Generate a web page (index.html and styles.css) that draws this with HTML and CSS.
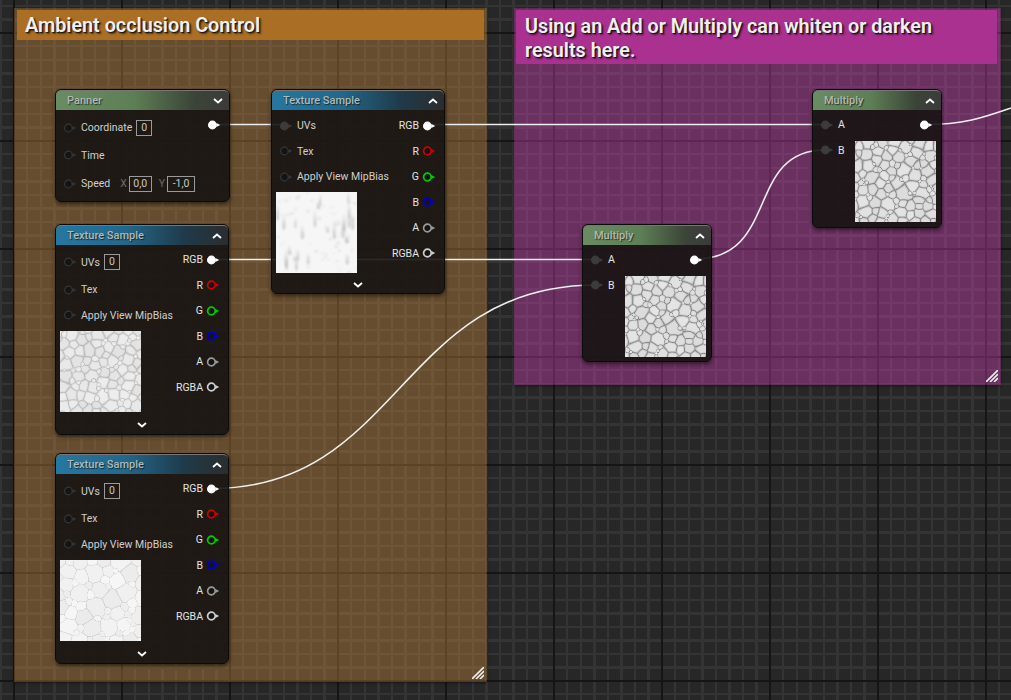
FILE: index.html
```html
<!DOCTYPE html>
<html lang="en">
<head>
  <meta charset="UTF-8">
  <title>Material graph</title>
  <link rel="stylesheet" href="styles.css">
</head>
<body>
  <svg width="0" height="0" class="defs">
    <symbol id="pin" viewBox="0 0 14 10">
      <path d="M9.4 3.1L13.2 5L9.4 6.9Z" fill="currentColor" stroke="none"/>
      <circle cx="5.4" cy="5" r="3.8"/>
    </symbol>
    <symbol id="chev-up" viewBox="0 0 10 6"><path d="M1 5L5 1.5L9 5" fill="none" stroke="#fff" stroke-width="1.8"/></symbol>
    <symbol id="chev-down" viewBox="0 0 10 6"><path d="M1 1L5 4.5L9 1" fill="none" stroke="#fff" stroke-width="1.8"/></symbol>
    <symbol id="grip" viewBox="0 0 12 12">
      <path d="M0 12L12 0M4 12L12 4M8 12L12 8" fill="none" stroke="#f0f0f0" stroke-width="1.6"/>
    </symbol>
  </svg>

  <div class="graph">
    <section class="comment comment-brown">
      <h2 class="comment-title">Ambient occlusion Control</h2>
      <svg class="grip"><use href="#grip"/></svg>
    </section>
    <section class="comment comment-purple">
      <h2 class="comment-title">Using an Add or Multiply can whiten or darken results here.</h2>
      <svg class="grip"><use href="#grip"/></svg>
    </section>

    <svg class="wires" width="1011" height="700">
      <path d="M213 124.5H285"/>
      <path d="M428 124.5H825"/>
      <path d="M213 259.5H596"/>
      <path d="M213 488.5C400 488 400 285 596 285"/>
      <path d="M695 259C780 259 745 150 825 150"/>
      <path d="M925 124.5C965 124.5 985 117 1011 108"/>
    </svg>

    <!-- Panner -->
    <div class="node node-panner">
      <div class="node-head head-green"><span>Panner</span><svg class="chev"><use href="#chev-down"/></svg></div>
      <div class="node-body">
        <div class="pins-in">
          <div class="pin-row row-box"><svg class="pin"><use href="#pin"/></svg>Coordinate <span class="val">0</span></div>
          <div class="pin-row row-time"><svg class="pin"><use href="#pin"/></svg>Time</div>
          <div class="pin-row row-box"><svg class="pin"><use href="#pin"/></svg>Speed <i class="axis">X</i><span class="val val-x">0,0</span><i class="axis">Y</i><span class="val val-y">-1,0</span></div>
        </div>
        <div class="pins-out">
          <div class="pin-row"><svg class="pin pin-white"><use href="#pin"/></svg></div>
        </div>
      </div>
    </div>

    <!-- Texture sample, top -->
    <div class="node node-tex node-tex-a">
      <div class="node-head head-blue"><span>Texture Sample</span><svg class="chev"><use href="#chev-up"/></svg></div>
      <div class="node-body">
        <div class="pins-in">
          <div class="pin-row"><svg class="pin pin-linked"><use href="#pin"/></svg>UVs</div>
          <div class="pin-row"><svg class="pin"><use href="#pin"/></svg>Tex</div>
          <div class="pin-row"><svg class="pin"><use href="#pin"/></svg>Apply View MipBias</div>
          <canvas class="tex" width="81" height="81" data-kind="rain"></canvas>
        </div>
        <div class="pins-out">
          <div class="pin-row">RGB<svg class="pin pin-white"><use href="#pin"/></svg></div>
          <div class="pin-row">R<svg class="pin pin-r"><use href="#pin"/></svg></div>
          <div class="pin-row">G<svg class="pin pin-g"><use href="#pin"/></svg></div>
          <div class="pin-row">B<svg class="pin pin-b"><use href="#pin"/></svg></div>
          <div class="pin-row">A<svg class="pin pin-a"><use href="#pin"/></svg></div>
          <div class="pin-row">RGBA<svg class="pin pin-rgba"><use href="#pin"/></svg></div>
        </div>
      </div>
      <div class="node-foot"><svg class="chev"><use href="#chev-down"/></svg></div>
    </div>

    <!-- Texture sample, middle -->
    <div class="node node-tex node-tex-b">
      <div class="node-head head-blue"><span>Texture Sample</span><svg class="chev"><use href="#chev-up"/></svg></div>
      <div class="node-body">
        <div class="pins-in">
          <div class="pin-row row-uv"><svg class="pin"><use href="#pin"/></svg>UVs <span class="val">0</span></div>
          <div class="pin-row"><svg class="pin"><use href="#pin"/></svg>Tex</div>
          <div class="pin-row"><svg class="pin"><use href="#pin"/></svg>Apply View MipBias</div>
          <canvas class="tex" width="81" height="81" data-kind="soft"></canvas>
        </div>
        <div class="pins-out">
          <div class="pin-row">RGB<svg class="pin pin-white"><use href="#pin"/></svg></div>
          <div class="pin-row">R<svg class="pin pin-r"><use href="#pin"/></svg></div>
          <div class="pin-row">G<svg class="pin pin-g"><use href="#pin"/></svg></div>
          <div class="pin-row">B<svg class="pin pin-b"><use href="#pin"/></svg></div>
          <div class="pin-row">A<svg class="pin pin-a"><use href="#pin"/></svg></div>
          <div class="pin-row">RGBA<svg class="pin pin-rgba"><use href="#pin"/></svg></div>
        </div>
      </div>
      <div class="node-foot"><svg class="chev"><use href="#chev-down"/></svg></div>
    </div>

    <!-- Texture sample, bottom -->
    <div class="node node-tex node-tex-c">
      <div class="node-head head-blue"><span>Texture Sample</span><svg class="chev"><use href="#chev-up"/></svg></div>
      <div class="node-body">
        <div class="pins-in">
          <div class="pin-row row-uv"><svg class="pin"><use href="#pin"/></svg>UVs <span class="val">0</span></div>
          <div class="pin-row"><svg class="pin"><use href="#pin"/></svg>Tex</div>
          <div class="pin-row"><svg class="pin"><use href="#pin"/></svg>Apply View MipBias</div>
          <canvas class="tex" width="81" height="81" data-kind="pale"></canvas>
        </div>
        <div class="pins-out">
          <div class="pin-row">RGB<svg class="pin pin-white"><use href="#pin"/></svg></div>
          <div class="pin-row">R<svg class="pin pin-r"><use href="#pin"/></svg></div>
          <div class="pin-row">G<svg class="pin pin-g"><use href="#pin"/></svg></div>
          <div class="pin-row">B<svg class="pin pin-b"><use href="#pin"/></svg></div>
          <div class="pin-row">A<svg class="pin pin-a"><use href="#pin"/></svg></div>
          <div class="pin-row">RGBA<svg class="pin pin-rgba"><use href="#pin"/></svg></div>
        </div>
      </div>
      <div class="node-foot"><svg class="chev"><use href="#chev-down"/></svg></div>
    </div>

    <!-- Multiply nodes -->
    <div class="node node-mul node-mul-a">
      <div class="node-head head-green"><span>Multiply</span><svg class="chev"><use href="#chev-up"/></svg></div>
      <div class="node-body">
        <div class="pins-in">
          <div class="pin-row"><svg class="pin pin-linked"><use href="#pin"/></svg>A</div>
          <div class="pin-row"><svg class="pin pin-linked"><use href="#pin"/></svg>B</div>
        </div>
        <div class="pins-out">
          <div class="pin-row"><svg class="pin pin-white"><use href="#pin"/></svg></div>
          <canvas class="tex" width="81" height="81" data-kind="hard"></canvas>
        </div>
      </div>
    </div>

    <div class="node node-mul node-mul-b">
      <div class="node-head head-green"><span>Multiply</span><svg class="chev"><use href="#chev-up"/></svg></div>
      <div class="node-body">
        <div class="pins-in">
          <div class="pin-row"><svg class="pin pin-linked"><use href="#pin"/></svg>A</div>
          <div class="pin-row"><svg class="pin pin-linked"><use href="#pin"/></svg>B</div>
        </div>
        <div class="pins-out">
          <div class="pin-row"><svg class="pin pin-white"><use href="#pin"/></svg></div>
          <canvas class="tex" width="81" height="81" data-kind="hard"></canvas>
        </div>
      </div>
    </div>
  </div>

  <script src="textures.js"></script>
</body>
</html>
```

FILE: styles.css
```css
* { box-sizing: border-box; }
html, body { margin: 0; height: 100%; overflow: hidden; background: #262626; }
.defs { position: absolute; }

.graph {
  position: relative;
  width: 1011px;
  height: 700px;
  overflow: hidden;
  font-family: Roboto, "Liberation Sans", sans-serif;
  background-color: #272727;
  background-image:
    linear-gradient(90deg, #151515 0 2px, transparent 2px),
    linear-gradient(#151515 0 2px, transparent 2px),
    repeating-linear-gradient(90deg, #343434 0 2px, transparent 2px 13.5px),
    repeating-linear-gradient(#343434 0 2px, transparent 2px 13.5px);
  background-size: 108px 108px;
  background-position: 13px 32px;
}

/* comment boxes */
.comment {
  position: absolute;
  border: 1px solid rgba(0, 0, 0, .12);
  box-shadow: 0 1px 3px rgba(0, 0, 0, .45);
}
.comment-brown { left: 14px; top: 8px; width: 473px; height: 674px; background: rgba(204, 140, 62, .39); }
.comment-purple { left: 514px; top: 8px; width: 487px; height: 377px; background: rgba(208, 63, 183, .4); }
.comment-title {
  margin: 1px 2px 0;
  padding: 0 8px;
  font-size: 19.8px;
  font-weight: 600;
  line-height: 24px;
  color: #f0f0f0;
  text-shadow: 1px 1px 1px #111, 2px 2px 2px rgba(0, 0, 0, .5);
}
.comment-brown .comment-title { height: 30px; padding-top: 4px; background: #aa6f24; margin-right: 2px; }
.comment-purple .comment-title { height: 54px; padding-top: 5px; padding-left: 9px; margin-left: 1px; margin-right: 3px; background: #ab3191; }
.grip { position: absolute; right: 2px; bottom: 2px; width: 12px; height: 12px; }

.wires { position: absolute; left: 0; top: 0; }
.wires path { fill: none; stroke: #efefef; stroke-width: 1.6; }

/* nodes */
.node {
  position: absolute;
  border: 1px solid #0b0b0b;
  border-radius: 6px;
  background: rgba(22, 20, 18, .9);
  box-shadow: 0 2px 4px rgba(0, 0, 0, .55);
  color: #cfcfcf;
  font-size: 10.5px;
}
.node-panner { left: 55px; top: 89px; width: 175px; height: 113px; }
.node-tex { width: 174px; }
.node-tex-a { left: 271px; top: 89px; }
.node-tex-b { left: 55px; top: 224px; }
.node-tex-c { left: 55px; top: 453px; }
.node-mul { width: 130px; }
.node-mul-a { left: 582px; top: 224px; height: 138px; }
.node-mul-b { left: 812px; top: 89px; height: 139px; }

.node-head {
  display: flex;
  align-items: center;
  justify-content: space-between;
  height: 20px;
  padding: 0 6px 0 11px;
  border-radius: 5px 5px 0 0;
  border-top: 1px solid #777;
  font-size: 11px;
  font-weight: 500;
  color: #b4b8b2;
  text-shadow: 1px 1px 1px rgba(0, 0, 0, .6);
}
.head-green { background: linear-gradient(90deg, #6a8c62 0, #5d7f55 45%, #3b4438 80%, #3b3b3a 100%); }
.head-blue { background: linear-gradient(90deg, #2677a0 0, #22688c 40%, #1f3a49 75%, #2b2d2e 100%); }

.node-body { display: flex; justify-content: space-between; padding: 2px 0 0 0; }
.pins-in { display: flex; flex-direction: column; }
.pins-out { display: flex; flex-direction: column; align-items: flex-end; color: #e4e4e4; }
.node-mul .pins-in { color: #e4e4e4; }

.pin-row { display: flex; align-items: center; gap: 4px; height: 25.5px; white-space: nowrap; }
.pins-in .pin-row { padding-left: 7px; }
.pins-out .pin-row { padding-right: 8px; gap: 3px; }
.row-box { height: 29px; }
.row-time { height: 26px; }
.row-uv { height: 30px; }
.row-box + .row-time + .row-box { margin-top: 1px; }
.node-panner .pins-in .pin-row:first-child { margin-top: 1px; }

.pin { width: 14px; height: 10px; flex: none; color: #363636; fill: #141414; stroke: #363636; stroke-width: 1.2; }
.pin-linked { color: #3c3c3c; fill: #3c3c3c; stroke: #3c3c3c; }
.pin-white { color: #fff; fill: #fff; stroke: #fff; }
.pin-r { color: #d00000; stroke: #d00000; stroke-width: 1.7; }
.pin-g { color: #00cc00; stroke: #00cc00; stroke-width: 1.7; }
.pin-b { color: #0000d0; stroke: #0000d0; stroke-width: 1.7; }
.pin-a { color: #9a9a9a; stroke: #9a9a9a; stroke-width: 1.7; }
.pin-rgba { color: #cfcfcf; stroke: #cfcfcf; stroke-width: 1.7; }

.val {
  display: inline-block;
  min-width: 16px;
  height: 16px;
  padding: 0 3px;
  border: 1px solid #9a9a9a;
  line-height: 13px;
  text-align: center;
  color: #c8c8c8;
}
.val-x { width: 23px; padding: 0; }
.val-y { width: 28px; padding: 0; }
.axis { font-style: normal; color: #6c6c6c; margin-left: 6px; margin-right: -2px; }
.axis + .val + .axis { margin-left: 3px; }

.tex { display: block; width: 81px; height: 81px; }
.pins-in .tex { margin: 3px 0 0 4px; }
.node-tex-a .pins-in .tex { margin-top: 2px; }
.node-tex-a .pin-row:first-child { margin-top: 1px; }
.pins-out .tex { margin: 3px 5px 0 0; }

.chev { width: 10px; height: 6px; }
.node-foot { display: flex; justify-content: center; align-items: center; height: 22px; padding-top: 3px; }
.node-tex-a .node-foot { height: 20px; padding-top: 4px; }
```

FILE: textures.js
```js
// small seeded generator so the textures come out the same every load
function rng(seed) {
  return function () {
    seed = (seed * 16807) % 2147483647;
    return seed / 2147483647;
  };
}

const kinds = {
  soft: { seed: 71, rmax: 4.6, rmin: 1.2, light: 238, dark: 192, width: 0.9, blur: 0.6 },
  pale: { seed: 23, rmax: 7, rmin: 2, light: 247, dark: 214, width: 0.3, blur: 0.5 },
  hard: { seed: 137, rmax: 4.6, rmin: 0.9, light: 230, dark: 140, width: 0.85, blur: 0.45 }
};

// pack stones biggest first, then split the square by distance / radius,
// which gives rounded borders between a big stone and a small one
function pebbles(ctx, opt) {
  const rand = rng(opt.seed);
  const stones = [];
  for (let r = opt.rmax; r >= opt.rmin; r -= 0.25) {
    for (let n = 0; n < 60; n++) {
      const x = rand() * 87 - 3, y = rand() * 87 - 3;
      const rr = r * (0.85 + rand() * 0.3);
      if (stones.every(s => Math.hypot(s.x - x, s.y - y) > (s.r + rr) * 0.95)) {
        stones.push({ x: x, y: y, r: rr, tone: rand() * 12 });
      }
    }
  }

  const img = ctx.createImageData(81, 81);
  for (let y = 0; y < 81; y++) {
    for (let x = 0; x < 81; x++) {
      let a = 1e9, b = 1e9, tone = 0;
      stones.forEach(s => {
        const d = Math.hypot(x - s.x, y - s.y) / s.r;
        if (d < a) { b = a; a = d; tone = s.tone; }
        else if (d < b) { b = d; }
      });
      const t = 1 - Math.min(1, (b - a) / opt.width);
      const v = opt.light - (opt.light - opt.dark) * t * t - tone;
      const i = (y * 81 + x) * 4;
      img.data[i] = img.data[i + 1] = img.data[i + 2] = v;
      img.data[i + 3] = 255;
    }
  }
  ctx.putImageData(img, 0, 0);

  // soften, the source looks like a scaled thumbnail
  ctx.filter = "blur(" + opt.blur + "px)";
  ctx.drawImage(ctx.canvas, 0, 0);
  ctx.filter = "none";
}

function rain(ctx) {
  const rand = rng(311);
  ctx.fillStyle = "#f6f6f6";
  ctx.fillRect(0, 0, 81, 81);
  ctx.filter = "blur(0.9px)";
  for (let i = 0; i < 70; i++) {
    ctx.fillStyle = "rgba(205,205,205," + (0.35 + rand() * 0.3) + ")";
    ctx.beginPath();
    ctx.arc(rand() * 81, rand() * 81, 0.7 + rand() * 0.7, 0, 7);
    ctx.fill();
  }
  for (let i = 0; i < 24; i++) {
    const x = rand() * 78 + 1, y = rand() * 68 - 3, h = 6 + rand() * 14;
    const g = ctx.createLinearGradient(0, y, 0, y + h);
    g.addColorStop(0, "rgba(190,190,190,0)");
    g.addColorStop(1, "rgba(170,170,170,.75)");
    ctx.fillStyle = g;
    ctx.beginPath();
    ctx.ellipse(x, y + h / 2, 1 + rand() * 0.8, h / 2, 0, 0, 7);
    ctx.fill();
  }
}

document.querySelectorAll("canvas.tex").forEach(c => {
  const ctx = c.getContext("2d");
  if (c.dataset.kind === "rain") rain(ctx);
  else pebbles(ctx, kinds[c.dataset.kind]);
});
```
